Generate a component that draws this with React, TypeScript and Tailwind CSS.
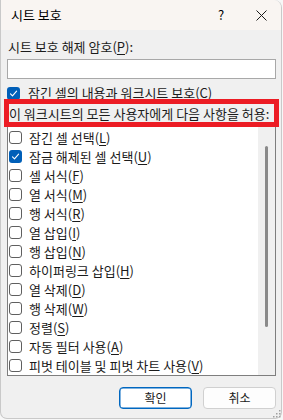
import React from 'react'

function Box({ checked }: { checked?: boolean }) {
  if (checked) {
    return (
      <span className="flex h-[13px] w-[13px] shrink-0 items-center justify-center rounded-[3px] bg-[#005fb8]">
        <svg width="9" height="9" viewBox="0 0 9 9" fill="none">
          <path d="M1.5 4.8 L3.5 6.8 L7.6 2.2" stroke="white" strokeWidth="1.1" strokeLinecap="round" strokeLinejoin="round" />
        </svg>
      </span>
    )
  }
  return <span className="h-[13px] w-[13px] shrink-0 rounded-[3px] border border-[#5f5f5f] bg-white" />
}

function Label({ text, k }: { text: string; k: string }) {
  return (
    <span className="whitespace-nowrap">
      {text}(<span className="underline underline-offset-[2px]">{k}</span>)
    </span>
  )
}

const rows: [string, string, boolean][] = [
  ['잠긴 셀 선택', 'L', false],
  ['잠금 해제된 셀 선택', 'U', true],
  ['셀 서식', 'F', false],
  ['열 서식', 'M', false],
  ['행 서식', 'R', false],
  ['열 삽입', 'I', false],
  ['행 삽입', 'N', false],
  ['하이퍼링크 삽입', 'H', false],
  ['열 삭제', 'D', false],
  ['행 삭제', 'W', false],
  ['정렬', 'S', false],
  ['자동 필터 사용', 'A', false],
  ['피벗 테이블 및 피벗 차트 사용', 'V', false],
]

export default function App() {
  return (
    <div className="relative h-[420px] w-[283px] overflow-hidden bg-[#f7f7f7] font-['Noto_Sans_CJK_KR',sans-serif] text-[13px] text-[#1b1b1b]">
      <div className="flex h-[419px] w-[282px] flex-col overflow-hidden rounded-tr-[8px] rounded-b-[7px] border-x border-b border-[#c9c9c9] bg-[#f0f0f0]">
        {/* title bar */}
        <div className="flex h-[30px] shrink-0 items-center bg-[#f9f5f2] pl-[10px]">
          <span className="text-black">시트 보호</span>
          <span className="ml-auto w-[20px] text-center text-[13px] text-black">?</span>
          <span className="ml-[24px] mr-[14px] flex h-[12px] w-[12px] items-center justify-center">
            <svg width="11" height="11" viewBox="0 0 11 11">
              <path d="M0.5 0.5 L10.5 10.5 M10.5 0.5 L0.5 10.5" stroke="#1b1b1b" strokeWidth="1" />
            </svg>
          </span>
        </div>

        {/* body */}
        <div className="flex flex-1 flex-col pl-[6px] pr-[5px] pt-[9px]">
          <div className="h-[16px] pl-[1px] leading-[16px]">
            시트 보호 해제 암호(<span className="underline underline-offset-[2px]">P</span>):
          </div>
          <div className="mt-[4px] h-[20px] border border-[#a8a8a8] bg-white" />

          <div className="mt-[6px] flex h-[16px] items-center gap-[8px] leading-[16px]">
            <Box checked />
            <Label text="잠긴 셀의 내용과 워크시트 보호" k="C" />
          </div>

          <div className="mt-[5px] h-[16px] overflow-hidden whitespace-nowrap pl-[2px] leading-[16px]">
            이 워크시트의 모든 사용자에게 다음 사항을 허용:
          </div>

          <div className="mt-[3px] flex h-[251px] border border-[#7e7e7e] bg-white">
            <div className="flex flex-1 flex-col overflow-hidden pl-[1px] pt-[2px]">
              {rows.map(([t, k, c]) => (
                <div key={k} className="flex h-[19px] shrink-0 items-center gap-[7px] leading-[16px]">
                  <Box checked={c} />
                  <Label text={t} k={k} />
                </div>
              ))}
            </div>
            <div className="w-[17px] shrink-0 bg-[#f0f0f0] pt-[20px]">
              <div className="mx-auto h-[181px] w-[3px] rounded-full bg-[#8a8a8a]" />
            </div>
          </div>

          <div className="mt-[11px] flex justify-end gap-[11px]">
            <button className="h-[22px] w-[73px] rounded-[4px] border border-[#0067c0] bg-white text-[12px] leading-[16px] text-[#1b1b1b] shadow-[inset_0_0_0_0.5px_#0067c0]">
              확인
            </button>
            <button className="h-[22px] w-[73px] rounded-[4px] border border-[#d0d0d0] bg-[#fdfdfd] text-[12px] leading-[16px] text-[#1b1b1b]">
              취소
            </button>
          </div>
        </div>
      </div>

      {/* annotation overlay */}
      <div className="absolute left-[4px] top-[99px] h-[28px] w-[275px] border-[5px] border-[#ec1c24]" />

      {/* resize grip */}
      <svg className="absolute left-[273px] top-[410px]" width="8" height="8" viewBox="0 0 8 8">
        <rect x="6" y="0" width="1.5" height="1.5" fill="#a0a0a0" />
        <rect x="3" y="3" width="1.5" height="1.5" fill="#a0a0a0" />
        <rect x="6" y="3" width="1.5" height="1.5" fill="#a0a0a0" />
        <rect x="0" y="6" width="1.5" height="1.5" fill="#a0a0a0" />
        <rect x="3" y="6" width="1.5" height="1.5" fill="#a0a0a0" />
        <rect x="6" y="6" width="1.5" height="1.5" fill="#a0a0a0" />
      </svg>
    </div>
  )
}
